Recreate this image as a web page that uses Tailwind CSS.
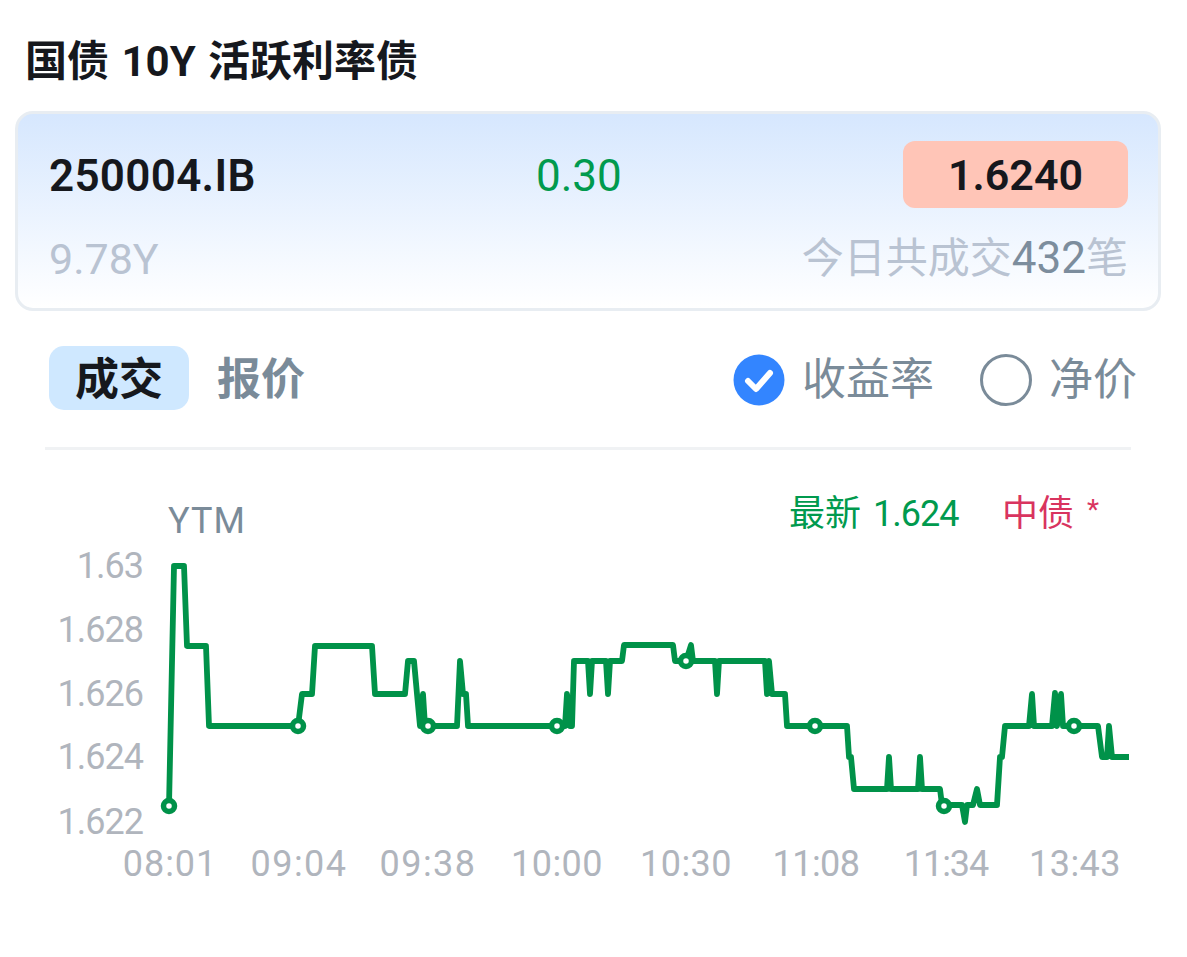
<!DOCTYPE html>
<html lang="zh-CN">
<head>
<meta charset="utf-8">
<script src="https://cdn.jsdelivr.net/npm/@tailwindcss/browser@4"></script>
</head>
<body class="bg-white">
<div class="w-[1187px] h-[957px] overflow-hidden bg-white font-['Roboto','Noto_Sans_CJK_SC',sans-serif]">
  <div class="h-[111px] pl-[25px] pt-[38px] text-[42px] leading-[48px] font-bold text-[#16181d] whitespace-pre [word-spacing:2px]">国债 10Y 活跃利率债</div>
  <div class="ml-[15px] w-[1146px] h-[200px] rounded-[18px] border-[3px] border-[#e8edf2] bg-gradient-to-b from-[#d6e7fe] to-white pl-[31px] pr-[30px] pt-[27px]">
    <div class="relative flex items-center justify-between h-[67px]">
      <span class="text-[44px] font-semibold text-[#16181d] pt-[2px] tracking-[0.3px]">250004.IB</span>
      <span class="absolute left-[487px] text-[44px] text-[#009a4e] pt-[2px]">0.30</span>
      <span class="w-[225px] h-[67px] rounded-[12px] bg-[#ffc5b7] flex items-center justify-center text-[43px] font-semibold text-[#16181d] pt-[2px]">1.6240</span>
    </div>
    <div class="flex items-center justify-between mt-[18px] h-[64px] text-[43px] text-[#b9c3d2]">
      <span class="pt-[2px]">9.78Y</span>
      <span class="text-[42px]">今日共成交<span class="text-[44px] text-[#7c8d9d]">432</span>笔</span>
    </div>
  </div>
  <div class="flex items-center h-[64px] mt-[35px] pl-[49px] text-[44px]">
    <span class="w-[140px] h-[64px] rounded-[15px] bg-[#cfe8ff] flex items-center justify-center font-bold text-[#16181d] pt-[3px]">成交</span>
    <span class="ml-[28px] font-bold text-[#7a8b99] pt-[3px]">报价</span>
    <svg class="ml-[428px] mt-[4px] shrink-0" width="52" height="52" viewBox="0 0 52 52">
      <circle cx="26" cy="26" r="25.5" fill="#3385ff"/>
      <path d="M15 27 L23 35 L37 19" fill="none" stroke="#fff" stroke-width="6" stroke-linecap="round" stroke-linejoin="round"/>
    </svg>
    <span class="ml-[17px] text-[#7a8b99] pt-[3px]">收益率</span>
    <svg class="ml-[46px] mt-[4px] shrink-0" width="52" height="52" viewBox="0 0 52 52">
      <circle cx="26" cy="26" r="24.5" fill="none" stroke="#7a8b99" stroke-width="3"/>
    </svg>
    <span class="ml-[17px] text-[#7a8b99] pt-[3px]">净价</span>
  </div>
  <div class="ml-[45px] w-[1086px] h-[3px] mt-[37px] bg-[#f0f2f4]"></div>
  <svg class="block" width="1187" height="507" viewBox="0 450 1187 507">
    <g class="text-[36px]">
      <text x="168" y="533" fill="#7a8b99" class="tracking-[1px]">YTM</text>
      <text x="789" y="526" fill="#009a4e">最新</text>
      <text x="873" y="526" fill="#009a4e" class="tracking-[-1px]">1.624</text>
      <text x="1002" y="526" fill="#d9345f">中债</text>
      <text x="1087" y="519" fill="#d9345f" class="text-[28px]">*</text>
      <g fill="#b0b5bd" text-anchor="end" class="tracking-[-1px]">
        <text x="143" y="578">1.63</text>
        <text x="143" y="642">1.628</text>
        <text x="143" y="706">1.626</text>
        <text x="143" y="769">1.624</text>
        <text x="143" y="834">1.622</text>
      </g>
      <g fill="#b0b5bd" text-anchor="middle">
        <text x="170" y="876" class="tracking-[1px]">08:01</text>
        <text x="299" y="876" class="tracking-[1.5px]">09:04</text>
        <text x="428" y="876" class="tracking-[1.5px]">09:38</text>
        <text x="557" y="876" class="tracking-[0.5px]">10:00</text>
        <text x="686" y="876" class="tracking-[0.5px]">10:30</text>
        <text x="816" y="876" class="tracking-[-0.5px]">11:08</text>
        <text x="946" y="876" class="tracking-[-1px]">11:34</text>
        <text x="1075" y="876" class="tracking-[0.5px]">13:43</text>
      </g>
    </g>
    <polyline fill="none" stroke="#009249" stroke-width="5.8" stroke-linejoin="round" points="169,806 174,566 184,566 187,646 206,646 209,726 298,726 302,694 312,694 315,646 372,646 375,694 405,694 408,661 414,661 417,694 420,726 423,694 425,726 457,726 460,661 463,694 466,694 468,726 565,726 567,694 570,726 572,726 574,661 588,661 590,694 592,661 606,661 608,694 610,661 622,661 624,645 673,645 675,661 686,661 691,645 693,661 715,661 717,694 719,661 765,661 767,694 769,661 772,694 785,694 787,726 847,726 849,757 851,757 854,789 887,789 889,757 891,789 918,789 920,757 922,789 940,789 942,805 962,805 965,822 967,805 973,805 977,789 980,805 997,805 1000,757 1002,757 1005,726 1029,726 1032,694 1034,726 1052,726 1055,693 1057,726 1061,694 1063,726 1098,726 1102,757 1107,757 1109,726 1112,757 1129,757"/>
    <g fill="#fff" stroke="#009249" stroke-width="5.5">
      <circle cx="169" cy="806" r="5.5"/>
      <circle cx="298" cy="726" r="5.5"/>
      <circle cx="428" cy="726" r="5.5"/>
      <circle cx="557" cy="726" r="5.5"/>
      <circle cx="686" cy="661" r="5.5"/>
      <circle cx="815" cy="726" r="5.5"/>
      <circle cx="944" cy="806" r="5.5"/>
      <circle cx="1074" cy="726" r="5.5"/>
    </g>
  </svg>
</div>
</body>
</html>
